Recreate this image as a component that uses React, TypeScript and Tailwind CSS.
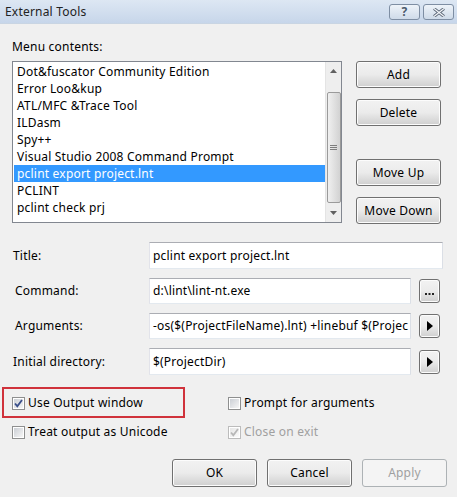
import React from "react";

const items = [
  "Dot&fuscator Community Edition",
  "Error Loo&kup",
  "ATL/MFC &Trace Tool",
  "ILDasm",
  "Spy++",
  "Visual Studio 2008 Command Prompt",
  "pclint export project.lnt",
  "PCLINT",
  "pclint check prj",
];

const btn =
  "flex items-center justify-center rounded-[3px] border border-[#707070] bg-gradient-to-b from-[#f2f2f2] via-[#ebebeb] via-50% to-[#cfcfcf] text-[12px] text-black shadow-[inset_0_0_0_1px_#fcfcfc]";

const field =
  "flex items-center overflow-hidden whitespace-nowrap border border-[#abadb3] border-l-[#e2e3ea] border-r-[#dbdfe6] border-b-[#e3e9ef] bg-white pl-[3px]";

function Button({ label, w = "w-[85px]", h = "h-[27px]", disabled = false }: { label: string; w?: string; h?: string; disabled?: boolean }) {
  if (disabled)
    return (
      <div className={`flex items-center justify-center rounded-[3px] border border-[#adb2b5] bg-[#f4f4f4] text-[12px] text-[#a0a0a0] ${w} ${h}`}>
        {label}
      </div>
    );
  return <div className={`${btn} ${w} ${h}`}>{label}</div>;
}

function Check({ checked, disabled = false }: { checked: boolean; disabled?: boolean }) {
  return (
    <svg width="13" height="13" viewBox="0 0 13 13" className="shrink-0">
      <defs>
        <linearGradient id={disabled ? "cbd" : "cb"} x1="0" y1="0" x2="1" y2="1">
          <stop offset="0" stopColor={disabled ? "#e6e6e6" : "#cbcfd5"} />
          <stop offset="1" stopColor={disabled ? "#fbfbfb" : "#f6f6f6"} />
        </linearGradient>
      </defs>
      <rect x="0.5" y="0.5" width="12" height="12" fill="#fff" stroke={disabled ? "#bcbcbc" : "#8e8f8f"} />
      <rect x="2" y="2" width="9" height="9" fill={`url(#${disabled ? "cbd" : "cb"})`} />
      {checked && (
        <path d="M3 6.5 L5.3 9.2 L10 3" fill="none" stroke={disabled ? "#b8b8b8" : "#3a4f8a"} strokeWidth="1.8" />
      )}
    </svg>
  );
}

function Arrow() {
  return (
    <div className={`${btn} w-[21px] h-[24px]`}>
      <svg width="6" height="10" viewBox="0 0 6 10">
        <path d="M0 0 L6 5 L0 10 Z" fill="#000" />
      </svg>
    </div>
  );
}

export default function App() {
  return (
    <div
      className="relative w-[457px] h-[497px] bg-[#f0f0f0] text-black overflow-hidden tracking-[0.2px]"
      style={{ fontFamily: '"Noto Sans", "Open Sans", sans-serif' }}
    >
      {/* title bar */}
      <div className="flex h-[24px] items-center justify-between bg-gradient-to-b from-[#dde7f3] to-[#c7d6ea] pl-[5px] pr-[3px] border-b border-[#c9d5e3]">
        <span className="text-[12px] text-[#222]">External Tools</span>
        <div className="flex gap-[3px] mt-[1px]">
          <div className="flex h-[16px] w-[31px] items-center justify-center rounded-[3px] border border-[#7e8ea3] bg-gradient-to-b from-[#eef3f9] to-[#cfdbe9] text-[12px] font-bold leading-none text-[#4c5a6c]">
            ?
          </div>
          <div className="flex h-[16px] w-[31px] items-center justify-center rounded-[3px] border border-[#7e8ea3] bg-gradient-to-b from-[#eef3f9] to-[#cfdbe9]">
            <svg width="12" height="9" viewBox="0 0 12 9">
              <path d="M1 0.5 L11 8.5 M11 0.5 L1 8.5" stroke="#5a6677" strokeWidth="3" />
              <path d="M1 0.5 L11 8.5 M11 0.5 L1 8.5" stroke="#f4f6f9" strokeWidth="1.2" />
            </svg>
          </div>
        </div>
      </div>

      <div className="px-[12px]">
        <div className="mt-[15px] h-[16px] text-[12px] leading-[16px]">Menu contents:</div>

        <div className="mt-[6px] flex">
          {/* list box */}
          <div className="flex h-[162px] w-[330px] border border-[#828790] bg-white">
            <div className="flex-1 pt-[1px] pl-[1px] text-[12px] leading-[17px]">
              {items.map((t, i) => (
                <div key={t} className={`h-[17px] pl-[3px] ${i === 6 ? "bg-[#3399ff] text-white" : ""}`}>
                  {t}
                </div>
              ))}
            </div>
            <div className="flex w-[16px] flex-col items-center bg-[#eeeeee] border-l border-[#e4e4e4]">
              <div className="flex h-[17px] w-full items-center justify-center">
                <svg width="7" height="4" viewBox="0 0 7 4"><path d="M0 4 L3.5 0 L7 4 Z" fill="#606060" /></svg>
              </div>
              <div className="mt-[13px] flex h-[111px] w-[14px] items-center justify-center rounded-[2px] border border-[#9a9a9a] bg-gradient-to-r from-[#f0f0f0] to-[#d2d2d2]">
                <svg width="7" height="6" viewBox="0 0 7 6">
                  <path d="M0 0.5 H7 M0 2.5 H7 M0 4.5 H7" stroke="#7d7d7d" strokeWidth="1" />
                </svg>
              </div>
              <div className="flex flex-1 w-full items-center justify-center">
                <svg width="7" height="4" viewBox="0 0 7 4"><path d="M0 0 L3.5 4 L7 0 Z" fill="#606060" /></svg>
              </div>
            </div>
          </div>

          {/* side buttons */}
          <div className="ml-[14px] flex flex-col">
            <Button label="Add" />
            <div className="mt-[11px]"><Button label="Delete" /></div>
            <div className="mt-[33px]"><Button label="Move Up" /></div>
            <div className="mt-[11px]"><Button label="Move Down" /></div>
          </div>
        </div>

        {/* fields */}
        <div className="mt-[18px] grid grid-cols-[137px_262px_1fr] items-center gap-y-[9px] text-[12px]">
          <div className="pl-[1px]">Title:</div>
          <div className={`${field} col-span-2 h-[27px] w-[294px]`}>pclint export project.lnt</div>

          <div className="pl-[3px]">Command:</div>
          <div className={`${field} h-[26px]`}>d:\lint\lint-nt.exe</div>
          <div className="pl-[8px]">
            <div className={`${btn} w-[21px] h-[24px]`}>
              <svg width="9" height="6" viewBox="0 0 9 6" className="mt-[6px]">
                <rect x="0" y="2" width="2" height="2" fill="#222" />
                <rect x="3.5" y="2" width="2" height="2" fill="#222" />
                <rect x="7" y="2" width="2" height="2" fill="#222" />
              </svg>
            </div>
          </div>

          <div className="pl-[3px]">Arguments:</div>
          <div className={`${field} h-[26px]`}>-os($(ProjectFileName).lnt) +linebuf $(Projec</div>
          <div className="pl-[8px]"><Arrow /></div>

          <div className="pl-[1px]">Initial directory:</div>
          <div className={`${field} h-[27px]`}>$(ProjectDir)</div>
          <div className="pl-[8px]"><Arrow /></div>
        </div>

        {/* checkboxes */}
        <div className="mt-[20px] grid grid-cols-[216px_1fr] gap-y-[13px] text-[12px] leading-[16px]">
          <div className="flex items-center gap-[3px]"><Check checked /><span>Use Output window</span></div>
          <div className="flex items-center gap-[3px]"><Check checked={false} /><span>Prompt for arguments</span></div>
          <div className="flex items-center gap-[3px]"><Check checked={false} /><span>Treat output as Unicode</span></div>
          <div className="flex items-center gap-[3px] text-[#a0a0a0]"><Check checked disabled /><span>Close on exit</span></div>
        </div>

        {/* dialog buttons */}
        <div className="mt-[19px] mr-[-2px] flex justify-end gap-[10px]">
          <Button label="OK" h="h-[28px]" />
          <Button label="Cancel" h="h-[28px]" />
          <Button label="Apply" h="h-[28px]" disabled />
        </div>
      </div>

      {/* red annotation box */}
      <div className="absolute left-[2px] top-[387px] h-[31px] w-[183px] border-2 border-[#d0323b]" />
    </div>
  );
}
